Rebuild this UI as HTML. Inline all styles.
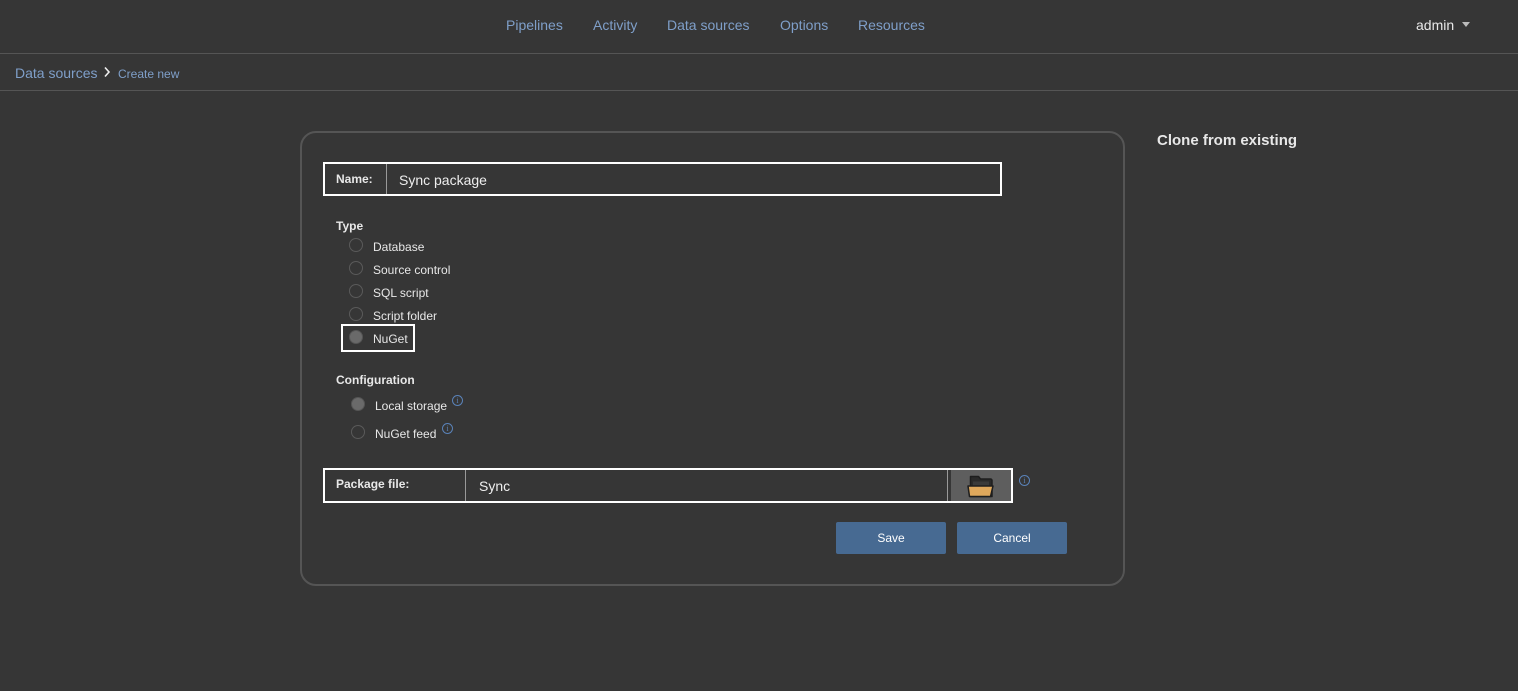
<!DOCTYPE html>
<html><head><style>
*{box-sizing:border-box;margin:0;padding:0}
body{width:1518px;height:691px;background:#363636;font-family:"Liberation Sans",Arial,sans-serif;color:#e6e6e6;position:relative;overflow:hidden}
.a{position:absolute}
.nav{color:#7f9fc9;font-size:14px;top:17px}
.hl{left:0;width:1518px;height:1px;background:#555}
.lbl{font-size:12px;font-weight:bold;color:#e8e8e8}
.rad{width:14px;height:14px;border-radius:50%;border:1px solid #5a5a5a;background:#363636}
.rad.on{background:#6a6a6a;border-color:#555}
.t{font-size:12px;color:#e8e8e8}
.info{width:11px;height:11px;border:1px solid #5a82b8;border-radius:50%;color:#5a82b8;font-size:8px;text-align:center;line-height:9px;font-family:"Liberation Serif",serif}
.btn{background:#476a92;color:#fff;font-size:12px;text-align:center;line-height:32px;border-radius:2px;width:110px;height:32px;top:522px}
</style></head><body>
<div class="a nav" style="left:506px">Pipelines</div>
<div class="a nav" style="left:593px">Activity</div>
<div class="a nav" style="left:667px">Data sources</div>
<div class="a nav" style="left:780px">Options</div>
<div class="a nav" style="left:858px">Resources</div>
<div class="a" style="left:1416px;top:17px;font-size:14px;color:#e8e8e8">admin</div>
<div class="a" style="left:1462px;top:22px;width:0;height:0;border-left:4px solid transparent;border-right:4px solid transparent;border-top:5px solid #bbb"></div>
<div class="a hl" style="top:53px"></div>
<div class="a" style="left:15px;top:65px;font-size:14px;color:#7f9fc9">Data sources</div>
<svg class="a" style="left:103px;top:66px" width="8" height="12"><path d="M2 1.5 L6 6 L2 10.5" stroke="#eee" stroke-width="1.6" fill="none"/></svg>
<div class="a" style="left:118px;top:67px;font-size:12px;color:#7f9fc9">Create new</div>
<div class="a hl" style="top:90px"></div>

<div class="a" style="left:300px;top:131px;width:825px;height:455px;border:2px solid #555;border-radius:16px"></div>
<div class="a" style="left:1157px;top:132px;font-size:15px;font-weight:bold;color:#e8e8e8">Clone from existing</div>

<div class="a" style="left:323px;top:162px;width:679px;height:34px;border:2px solid #fff"></div>
<div class="a" style="left:386px;top:164px;width:1px;height:30px;background:#999"></div>
<div class="a lbl" style="left:336px;top:172px">Name:</div>
<div class="a" style="left:399px;top:172px;font-size:14px;color:#eee">Sync package</div>

<div class="a lbl" style="left:336px;top:219px">Type</div>
<div class="a rad" style="left:349px;top:238px"></div><div class="a t" style="left:373px;top:240px">Database</div>
<div class="a rad" style="left:349px;top:261px"></div><div class="a t" style="left:373px;top:263px">Source control</div>
<div class="a rad" style="left:349px;top:284px"></div><div class="a t" style="left:373px;top:286px">SQL script</div>
<div class="a rad" style="left:349px;top:307px"></div><div class="a t" style="left:373px;top:309px">Script folder</div>
<div class="a" style="left:341px;top:324px;width:74px;height:28px;border:2px solid #fff"></div>
<div class="a rad on" style="left:349px;top:330px"></div><div class="a t" style="left:373px;top:332px">NuGet</div>

<div class="a lbl" style="left:336px;top:373px">Configuration</div>
<div class="a rad on" style="left:351px;top:397px"></div><div class="a t" style="left:375px;top:399px">Local storage</div>
<div class="a info" style="left:452px;top:395px">i</div>
<div class="a rad" style="left:351px;top:425px"></div><div class="a t" style="left:375px;top:427px">NuGet feed</div>
<div class="a info" style="left:442px;top:423px">i</div>

<div class="a" style="left:323px;top:468px;width:690px;height:35px;border:2px solid #fff"></div>
<div class="a" style="left:465px;top:470px;width:1px;height:31px;background:#999"></div>
<div class="a" style="left:947px;top:470px;width:1px;height:31px;background:#999"></div>
<div class="a" style="left:951px;top:470px;width:60px;height:31px;background:#5e5e5e"></div>
<svg class="a" style="left:965px;top:474px" width="32" height="26"><path d="M5.5 2.5 h8 l2 2.5 h10 a1.5 1.5 0 0 1 1.5 1.5 v16 h-21.5 z" fill="#2a2a2a" stroke="#1e1e1e" stroke-width="1.5" stroke-linejoin="round"/><path d="M8 7.5 h16 v4 h-16z" fill="#3a3a3a"/><path d="M3 12 h25 l-2.5 10.5 h-21 z" fill="#dfa85c" stroke="#1e1e1e" stroke-width="1.5" stroke-linejoin="round"/></svg>
<div class="a lbl" style="left:336px;top:477px">Package file:</div>
<div class="a" style="left:479px;top:478px;font-size:14px;color:#eee">Sync</div>
<div class="a info" style="left:1019px;top:475px">i</div>

<div class="a btn" style="left:836px">Save</div>
<div class="a btn" style="left:957px">Cancel</div>
</body></html>
